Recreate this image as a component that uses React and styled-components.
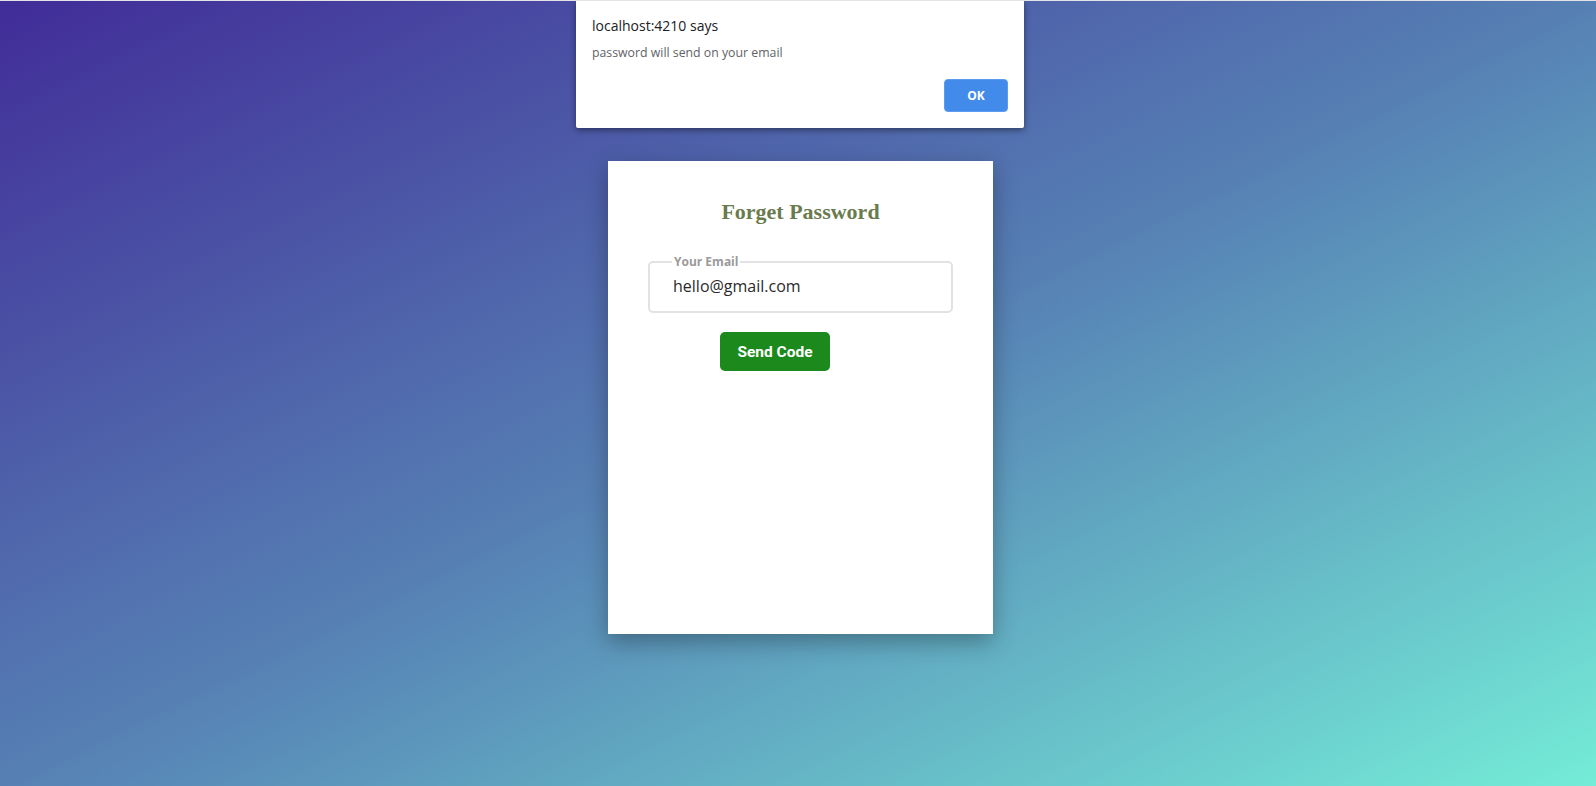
import React from "react"
import styled, { createGlobalStyle } from "styled-components"

const GlobalStyle = createGlobalStyle`
  html, body {
    margin: 0;
    padding: 0;
  }
  body {
    font-family: "Open Sans", "Noto Sans", sans-serif;
  }
`

const Page = styled.div`
  position: relative;
  box-sizing: border-box;
  width: 100%;
  min-height: 786px;
  border-top: 1px solid #e4e4e8;
  background: linear-gradient(to bottom right, #412c98 0%, #5680b4 50%, #74ecd7 100%);
  display: flex;
  justify-content: center;
  align-items: flex-start;
  padding: 160px 0 0 5px;
  overflow: hidden;
`

const Alert = styled.div`
  position: absolute;
  top: 0;
  left: calc(50% - 222px);
  width: 448px;
  box-sizing: border-box;
  background: #fff;
  border-radius: 0 0 2px 2px;
  box-shadow: 0 2px 6px rgba(0, 0, 0, 0.45);
  padding: 15px 16px 16px 16px;
  display: flex;
  flex-direction: column;
`

const AlertTitle = styled.div`
  font-size: 14px;
  line-height: 20px;
  color: #202124;
`

const AlertMessage = styled.div`
  margin-top: 9px;
  font-size: 12.3px;
  line-height: 16px;
  color: #5f6368;
`

const AlertActions = styled.div`
  display: flex;
  justify-content: flex-end;
  margin-top: 18px;
`

const OkButton = styled.button`
  width: 64px;
  height: 33px;
  border: 1px solid #5b9bf0;
  border-radius: 4px;
  background: #438bea;
  color: #fff;
  font-family: "Open Sans", sans-serif;
  font-weight: 700;
  font-size: 12px;
  cursor: pointer;
`

const Card = styled.div`
  width: 385px;
  height: 473px;
  box-sizing: border-box;
  background: #fff;
  box-shadow: 0 8px 22px rgba(0, 0, 0, 0.3);
  padding: 38px 40px;
  display: flex;
  flex-direction: column;
  align-items: flex-start;
`

const Title = styled.h3`
  align-self: stretch;
  margin: 0 0 30px 0;
  text-align: center;
  font-family: "Liberation Serif", "Times New Roman", serif;
  font-weight: 700;
  font-size: 22px;
  line-height: 26px;
  color: #6a7b4e;
`

const Field = styled.fieldset`
  width: 305px;
  box-sizing: border-box;
  margin: 0 0 19px 0;
  padding: 0 10px 8px 22px;
  border: 2px solid #e2e2e2;
  border-radius: 5px;
  min-width: 0;
`

const FieldLabel = styled.legend`
  padding: 0 2px;
  font-size: 12px;
  line-height: 14px;
  font-weight: 700;
  color: #9a9a9a;
`

const EmailInput = styled.input`
  display: block;
  width: 100%;
  height: 34px;
  box-sizing: border-box;
  border: none;
  outline: none;
  padding: 0 1px;
  font-family: "Open Sans", sans-serif;
  font-size: 16px;
  color: #2a2a2a;
  background: transparent;
`

const SendButton = styled.button`
  margin-left: 72px;
  width: 110px;
  height: 39px;
  border: none;
  border-radius: 5px;
  background: #1c891c;
  color: #fff;
  font-family: Roboto, "Liberation Sans", sans-serif;
  font-weight: 700;
  font-size: 15.5px;
  cursor: pointer;
`

export default function App() {
  return (
    <>
      <GlobalStyle />
      <Page>
        <Alert>
          <AlertTitle>localhost:4210 says</AlertTitle>
          <AlertMessage>password will send on your email</AlertMessage>
          <AlertActions>
            <OkButton>OK</OkButton>
          </AlertActions>
        </Alert>
        <Card>
          <Title>Forget Password</Title>
          <Field>
            <FieldLabel>Your Email</FieldLabel>
            <EmailInput type="email" defaultValue="hello@gmail.com" />
          </Field>
          <SendButton>Send Code</SendButton>
        </Card>
      </Page>
    </>
  )
}
